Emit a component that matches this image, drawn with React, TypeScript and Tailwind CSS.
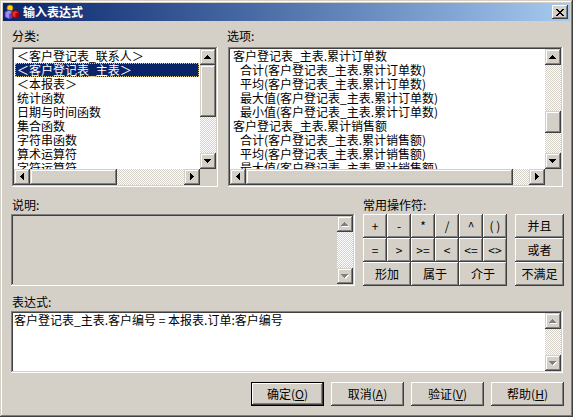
import React from "react";

// classic win9x bevels
const frame = "shadow-[inset_-1px_-1px_#404040,inset_1px_1px_#d4d0c8,inset_-2px_-2px_#808080,inset_2px_2px_#ffffff]";
const raised = "shadow-[inset_-1px_-1px_#404040,inset_1px_1px_#ffffff,inset_-2px_-2px_#808080,inset_2px_2px_#d4d0c8]";
const sunken = "shadow-[inset_-1px_-1px_#ffffff,inset_1px_1px_#808080,inset_-2px_-2px_#d4d0c8,inset_2px_2px_#404040]";
const defBtn =
  "shadow-[inset_0_0_0_1px_#000000,inset_-2px_-2px_#404040,inset_2px_2px_#ffffff,inset_-3px_-3px_#808080,inset_3px_3px_#d4d0c8]";
const dither =
  "bg-[image:repeating-conic-gradient(#ffffff_0_25%,#d4d0c8_0_50%)] bg-[length:2px_2px] bg-size-[2px_2px]";

type Dir = "up" | "down" | "left" | "right";

const Arrow = ({ dir, disabled = false }: { dir: Dir; disabled?: boolean }) => {
  const vertical = dir === "up" || dir === "down";
  const rects = [1, 3, 5, 7].map((len, i) => {
    const idx = dir === "up" || dir === "left" ? i : 3 - i;
    const off = (7 - len) / 2;
    return vertical ? { x: off, y: idx, w: len, h: 1 } : { x: idx, y: off, w: 1, h: len };
  });
  return (
    <svg width={vertical ? 8 : 5} height={vertical ? 5 : 8} shapeRendering="crispEdges">
      {disabled &&
        rects.map((r, i) => <rect key={"s" + i} x={r.x + 1} y={r.y + 1} width={r.w} height={r.h} fill="#ffffff" />)}
      {rects.map((r, i) => (
        <rect key={i} x={r.x} y={r.y} width={r.w} height={r.h} fill={disabled ? "#808080" : "#000000"} />
      ))}
    </svg>
  );
};

const ScrollBtn = ({ dir, disabled }: { dir: Dir; disabled?: boolean }) => (
  <div className={`w-[16px] h-[16px] shrink-0 bg-[#d4d0c8] flex items-center justify-center ${frame}`}>
    <Arrow dir={dir} disabled={disabled} />
  </div>
);

const VScroll = ({ pre, thumb, disabled }: { pre?: string; thumb?: string; disabled?: boolean }) => (
  <div className="w-[16px] shrink-0 flex flex-col">
    <ScrollBtn dir="up" disabled={disabled} />
    {pre && <div className={`${pre} shrink-0 ${dither}`} />}
    {thumb && <div className={`${thumb} shrink-0 bg-[#d4d0c8] ${frame}`} />}
    <div className={`flex-1 ${dither}`} />
    <ScrollBtn dir="down" disabled={disabled} />
  </div>
);

const HScroll = ({ thumb }: { thumb: string }) => (
  <div className="h-[16px] flex-1 flex">
    <ScrollBtn dir="left" />
    <div className={`${thumb} shrink-0 bg-[#d4d0c8] ${frame}`} />
    <div className={`flex-1 ${dither}`} />
    <ScrollBtn dir="right" />
  </div>
);

const AppIcon = () => (
  <svg width="16" height="16" viewBox="0 0 16 16" className="ml-[1px] shrink-0">
    <circle cx="6" cy="4" r="3" fill="#ffd200" stroke="#a07800" strokeWidth="0.8" />
    <path d="M1 8 L5 6 L9 8 L9 13 L5 15 L1 13 Z" fill="#9c8cf0" stroke="#3c2c9c" strokeWidth="0.8" />
    <path d="M5 10 L9 8 L9 13 L5 15 Z" fill="#5a48c8" />
    <path d="M8 8 L11.5 6.5 L15 8 L15 12.5 L11.5 14 L8 12.5 Z" fill="#ee2a2a" stroke="#7a0000" strokeWidth="0.8" />
    <path d="M11.5 9.5 L15 8 L15 12.5 L11.5 14 Z" fill="#a80000" />
  </svg>
);

const CloseGlyph = () => {
  const px: [number, number, number][] = [
    [0, 0, 2], [6, 0, 2], [1, 1, 2], [5, 1, 2], [2, 2, 4], [3, 3, 2], [2, 4, 4], [1, 5, 2], [5, 5, 2], [0, 6, 2], [6, 6, 2],
  ];
  return (
    <svg width="8" height="7" shapeRendering="crispEdges">
      {px.map(([x, y, w], i) => (
        <rect key={i} x={x} y={y} width={w} height={1} fill="#000000" />
      ))}
    </svg>
  );
};

const categories = [
  "＜客户登记表_联系人＞",
  "＜客户登记表_主表＞",
  "＜本报表＞",
  "统计函数",
  "日期与时间函数",
  "集合函数",
  "字符串函数",
  "算术运算符",
  "字符运算符",
];

const options: { text: string; child?: boolean }[] = [
  { text: "客户登记表_主表.累计订单数" },
  { text: "合计(客户登记表_主表.累计订单数)", child: true },
  { text: "平均(客户登记表_主表.累计订单数)", child: true },
  { text: "最大值(客户登记表_主表.累计订单数)", child: true },
  { text: "最小值(客户登记表_主表.累计订单数)", child: true },
  { text: "客户登记表_主表.累计销售额" },
  { text: "合计(客户登记表_主表.累计销售额)", child: true },
  { text: "平均(客户登记表_主表.累计销售额)", child: true },
  { text: "最大值(客户登记表_主表.累计销售额)", child: true },
];

const ops1 = ["+", "-", "*", "/", "^", "( )"];
const ops2 = ["=", ">", ">=", "<", "<=", "<>"];
const ops3 = ["形加", "属于", "介于"];
const logic = ["并且", "或者", "不满足"];

const OpBtn = ({ label, className = "" }: { label: string; className?: string }) => (
  <div className={`h-[24px] flex items-center justify-center bg-[#d4d0c8] ${raised} ${className}`}>{label}</div>
);

export default function App() {
  return (
    <div
      className={`w-[573px] h-[417px] bg-[#d4d0c8] p-[3px] flex flex-col ${frame} font-['Noto_Sans_CJK_SC',sans-serif] text-[12px] leading-[14px] text-black`}
    >
      {/* Title bar */}
      <div className="h-[18px] shrink-0 flex items-center bg-linear-to-r from-[#0a246a] to-[#a6caf0] pr-[2px]">
        <AppIcon />
        <span className="ml-[3px] text-white font-bold">输入表达式</span>
        <div className={`ml-auto w-[16px] h-[14px] bg-[#d4d0c8] flex items-center justify-center ${raised}`}>
          <CloseGlyph />
        </div>
      </div>

      <div className="flex-1 flex flex-col pl-[8px]">
        {/* Category + options lists */}
        <div className="mt-[8px] flex">
          <div className="w-[206px] ml-[1px] flex flex-col">
            <span className="h-[14px]">分类:</span>
            <div className={`mt-[4px] h-[140px] bg-white p-[2px] flex flex-col ${sunken}`}>
              <div className="flex-1 flex min-h-0">
                <div className="flex-1 overflow-hidden">
                  {categories.map((c, i) => (
                    <div
                      key={c}
                      className={`h-[14px] mx-[1px] pl-[2px] whitespace-nowrap ${
                        i === 1
                          ? "bg-[#0a246a] text-white outline-1 outline-dotted outline-[#d8c890] -outline-offset-1"
                          : ""
                      }`}
                    >
                      {c}
                    </div>
                  ))}
                </div>
                <VScroll thumb="h-[52px]" />
              </div>
              <div className="flex">
                <HScroll thumb="w-[87px]" />
                <div className="w-[16px] h-[16px] bg-[#d4d0c8]" />
              </div>
            </div>
          </div>

          <div className="w-[335px] ml-[10px] flex flex-col">
            <span className="h-[14px] -ml-[1px]">选项:</span>
            <div className={`mt-[4px] h-[140px] bg-white p-[2px] flex flex-col ${sunken}`}>
              <div className="flex-1 flex min-h-0">
                <div className="flex-1 overflow-hidden">
                  {options.map((o, i) => (
                    <div
                      key={i}
                      className={`h-[14px] whitespace-nowrap ${o.child ? "pl-[10px]" : "pl-[3px]"}`}
                    >
                      {o.text}
                    </div>
                  ))}
                </div>
                <VScroll pre="h-[46px]" thumb="h-[22px]" />
              </div>
              <div className="flex">
                <HScroll thumb="w-[267px]" />
                <div className="w-[16px] h-[16px] bg-[#d4d0c8]" />
              </div>
            </div>
          </div>
        </div>

        {/* Description + operators */}
        <div className="mt-[11px] flex">
          <div className="w-[344px] flex flex-col">
            <span className="h-[14px] pl-[1px]">说明:</span>
            <div className={`mt-[2px] h-[72px] bg-[#d4d0c8] p-[2px] flex ${sunken}`}>
              <div className="flex-1" />
              <VScroll disabled />
            </div>
          </div>

          <div className="ml-[8px] flex flex-col">
            <span className="h-[14px]">常用操作符:</span>
            <div className="mt-[2px] flex">
              <div className="w-[144px] grid grid-cols-6">
                {ops1.map((o) => (
                  <OpBtn key={o} label={o} />
                ))}
                {ops2.map((o) => (
                  <OpBtn key={o} label={o} />
                ))}
                {ops3.map((o) => (
                  <OpBtn key={o} label={o} className="col-span-2" />
                ))}
              </div>
              <div className="ml-[8px] w-[49px] flex flex-col">
                {logic.map((o) => (
                  <OpBtn key={o} label={o} />
                ))}
              </div>
            </div>
          </div>
        </div>

        {/* Expression */}
        <div className="mt-[9px] flex flex-col">
          <span className="h-[14px] pl-[1px]">表达式:</span>
          <div className={`mt-[2px] w-[552px] h-[62px] bg-white p-[2px] flex ${sunken}`}>
            <div className="flex-1 pl-[1px] whitespace-nowrap">客户登记表_主表.客户编号 = 本报表.订单:客户编号</div>
            <VScroll disabled />
          </div>
        </div>

        {/* Dialog buttons */}
        <div className="mt-[9px] ml-[240px] flex gap-[7px]">
          <div className={`w-[73px] h-[24px] flex items-center justify-center ${defBtn}`}>
            确定(<u>O</u>)
          </div>
          <div className={`w-[73px] h-[24px] flex items-center justify-center ${raised}`}>
            取消(<u>A</u>)
          </div>
          <div className={`w-[73px] h-[24px] flex items-center justify-center ${raised}`}>
            验证(<u>V</u>)
          </div>
          <div className={`w-[73px] h-[24px] flex items-center justify-center ${raised}`}>
            帮助(<u>H</u>)
          </div>
        </div>
      </div>
    </div>
  );
}
